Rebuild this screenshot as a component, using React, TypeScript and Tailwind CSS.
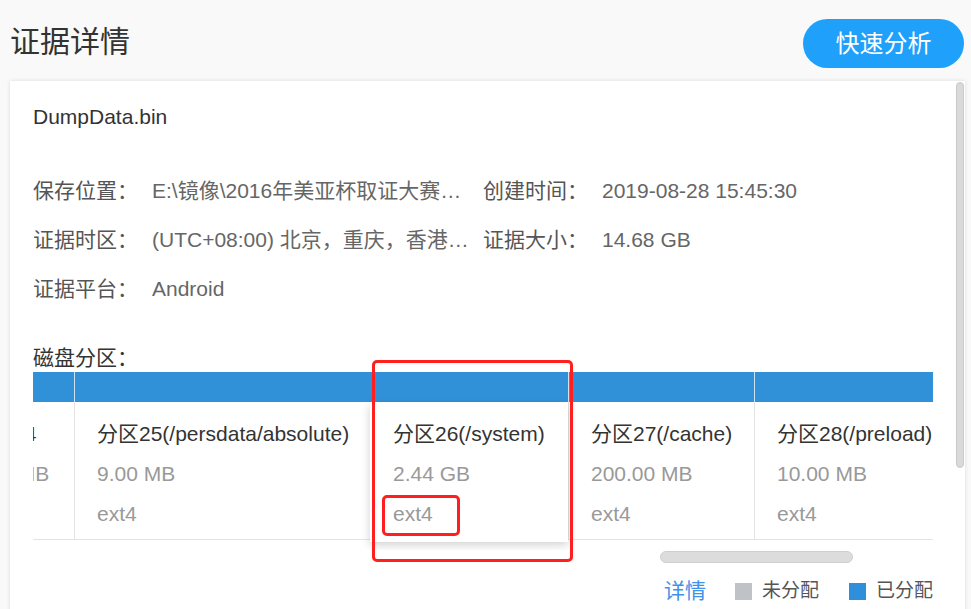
import React from 'react';

type Partition = {
    name: string;
    size: string;
    fs: string;
    width: string;
    active?: boolean;
};

const partitions: Partition[] = [
    { name: '分区24', size: '8.00 MB', fs: 'ext4', width: 'w-[126px]' },
    { name: '分区25(/persdata/absolute)', size: '9.00 MB', fs: 'ext4', width: 'w-[296px]' },
    { name: '分区26(/system)', size: '2.44 GB', fs: 'ext4', width: 'w-[198px]', active: true },
    { name: '分区27(/cache)', size: '200.00 MB', fs: 'ext4', width: 'w-[186px]' },
    { name: '分区28(/preload)', size: '10.00 MB', fs: 'ext4', width: 'w-[202px]' },
];

function InfoRow({ label, value, label2, value2 }: { label: string; value: string; label2?: string; value2?: string }) {
    return (
        <div className="flex h-[28px] items-center leading-[28px]">
            <span className="w-[119px] shrink-0 text-[#555]">{label}</span>
            <span className="w-[331px] shrink-0 text-[#666]">
                <span className="block w-[326px] truncate whitespace-nowrap">{value}</span>
            </span>
            {label2 && <span className="w-[119px] shrink-0 text-[#555]">{label2}</span>}
            {value2 && <span className="text-[#666]">{value2}</span>}
        </div>
    );
}

function PartitionCell({ p }: { p: Partition }) {
    return (
        <div className={`${p.width} shrink-0 flex flex-col`}>
            {/* blue usage bar segment */}
            <div className={`h-[30px] bg-[#3191d8] ${p.active ? '' : 'border-l border-[#cfe3f4]'}`} />
            <div
                className={
                    p.active
                        ? 'relative z-10 h-[140px] bg-white pl-[23px] pr-6 pt-[12px] shadow-[0_3px_9px_rgba(0,0,0,0.18)]'
                        : 'h-[138px] border-l border-b border-[#e4e4e4] pl-[22px] pr-6 pt-[12px]'
                }
            >
                <div className="h-[40px] leading-[40px] whitespace-nowrap text-[#333]">{p.name}</div>
                <div className="h-[40px] leading-[40px] whitespace-nowrap text-[#999]">{p.size}</div>
                <div className="h-[40px] leading-[40px] whitespace-nowrap text-[#999]">{p.fs}</div>
            </div>
        </div>
    );
}

export default function App() {
    return (
        <div className="relative w-[971px] h-[609px] overflow-hidden bg-[#f8f9f8] font-['Liberation_Sans','Noto_Sans_CJK_SC',sans-serif] text-[21px]">
            {/* Header */}
            <div className="mt-[19px] mb-[13px] flex h-[49px] items-center justify-between pl-[10px] pr-[7px]">
                <h1 className="mb-[4px] text-[30px] leading-none text-[#333]">证据详情</h1>
                <button className="h-[49px] w-[161px] rounded-full bg-[#1fa0fb] text-[24px] text-white">快速分析</button>
            </div>

            {/* Card */}
            <div className="ml-[10px] flex w-[955px] bg-white shadow-[0_0_4px_rgba(0,0,0,0.12)]">
                <div className="w-[946px] shrink-0 px-[23px] pt-[22px] pb-[40px]">
                    <div className="h-[28px] leading-[28px] text-[#333]">DumpData.bin</div>

                    <div className="mt-[46px] flex flex-col gap-[21px]">
                        <InfoRow label="保存位置：" value="E:\镜像\2016年美亚杯取证大赛…" label2="创建时间：" value2="2019-08-28 15:45:30" />
                        <InfoRow label="证据时区：" value="(UTC+08:00) 北京，重庆，香港…" label2="证据大小：" value2="14.68 GB" />
                        <InfoRow label="证据平台：" value="Android" />
                    </div>

                    <div className="mt-[41px] h-[28px] leading-[28px] text-[#333]">磁盘分区：</div>

                    {/* partitions strip */}
                    <div className="w-[900px] overflow-hidden pb-[8px]">
                        <div className="ml-[-85px] flex">
                            {partitions.map((p) => (
                                <PartitionCell key={p.name} p={p} />
                            ))}
                        </div>
                    </div>
                    <div className="mt-px h-[12px]">
                        <div className="ml-[627px] h-[12px] w-[193px] rounded-full border border-[#cfcfcf] bg-[#dcdcdc]" />
                    </div>

                    {/* legend */}
                    <div className="mt-[14px] flex h-[28px] items-center justify-end">
                        <span className="text-[21px] text-[#3f92e8]">详情</span>
                        <span className="ml-[29px] h-[17px] w-[17px] bg-[#bfc3c7]" />
                        <span className="ml-[10px] text-[19px] text-[#555]">未分配</span>
                        <span className="ml-[30px] h-[17px] w-[17px] bg-[#2f8fdb]" />
                        <span className="ml-[10px] text-[19px] text-[#555]">已分配</span>
                    </div>
                </div>

                {/* vertical scrollbar */}
                <div className="w-[8px] shrink-0 pt-px">
                    <div className="h-[386px] w-[8px] rounded-[4px] border border-[#cacaca] bg-[#d9d9d9]" />
                </div>
            </div>

            {/* red annotation boxes */}
            <div className="pointer-events-none absolute z-20 left-[372px] top-[360px] h-[202px] w-[201px] rounded-[5px] border-[3px] border-[#ff1f1f]" />
            <div className="pointer-events-none absolute z-20 left-[382px] top-[495px] h-[41px] w-[78px] rounded-[5px] border-[3px] border-[#ff1f1f]" />
        </div>
    );
}
